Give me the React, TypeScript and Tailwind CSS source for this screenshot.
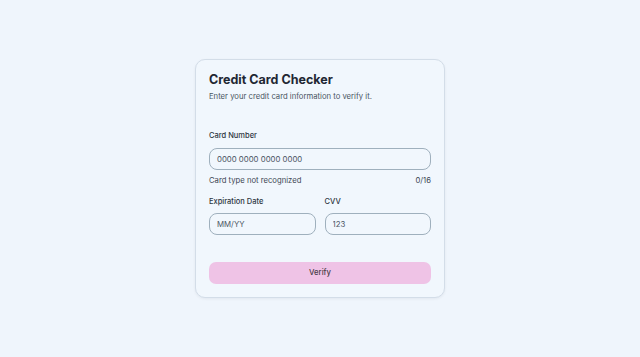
export default function App() {
  return (
    <div className="flex min-h-screen items-center justify-center bg-[#eff5fc] font-['Inter',sans-serif]">
      <div className="flex w-[250px] flex-col rounded-[10px] border border-[#d3dde8] bg-[#f1f7fd] px-[13px] pb-[13px] pt-[12px] shadow-[0_1px_3px_rgba(15,23,42,0.06)]">
        <h1 className="text-[12.5px] font-bold leading-[16px] text-[#1f2733]">Credit Card Checker</h1>
        <p className="mt-[3px] text-[7.7px] leading-[12px] text-[#4a5563]">
          Enter your credit card information to verify it.
        </p>

        <label className="mt-[27px] text-[7.5px] font-medium leading-[12px] text-[#2d3642]">Card Number</label>
        <input
          placeholder="0000 0000 0000 0000"
          className="mt-[6px] h-[22px] w-full rounded-[8px] border border-[#9fb0bd] bg-transparent px-[7px] text-[7.8px] text-[#333] outline-none placeholder:text-[#4b5563]"
        />
        <div className="mt-[5px] flex items-center justify-between text-[7.7px] leading-[12px] text-[#3d4653]">
          <span>Card type not recognized</span>
          <span>0/16</span>
        </div>

        <div className="mt-[9px] grid grid-cols-2 gap-[9px]">
          <div className="flex flex-col">
            <label className="text-[7.5px] font-medium leading-[12px] text-[#2d3642]">Expiration Date</label>
            <input
              placeholder="MM/YY"
              className="mt-[5px] h-[22px] w-full rounded-[8px] border border-[#9fb0bd] bg-transparent px-[7px] text-[7.8px] outline-none placeholder:text-[#4b5563]"
            />
          </div>
          <div className="flex flex-col">
            <label className="text-[7.5px] font-medium leading-[12px] text-[#2d3642]">CVV</label>
            <input
              placeholder="123"
              className="mt-[5px] h-[22px] w-full rounded-[8px] border border-[#9fb0bd] bg-transparent px-[7px] text-[7.8px] outline-none placeholder:text-[#4b5563]"
            />
          </div>
        </div>

        <button className="mt-[27px] h-[22px] w-full rounded-[7px] bg-[#efc3e6] text-[7.7px] font-medium text-[#4a3d4a]">
          Verify
        </button>
      </div>
    </div>
  );
}
